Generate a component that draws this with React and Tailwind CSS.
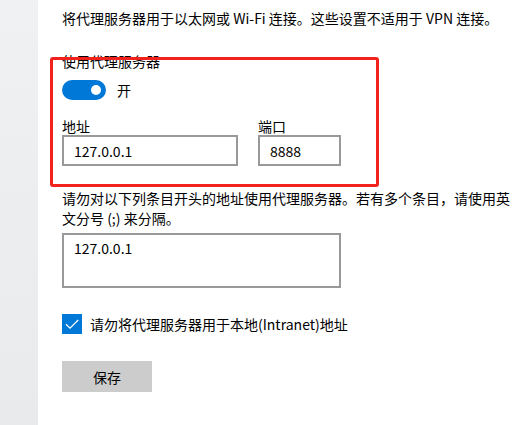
import { useState } from "react";

const font = { fontFamily: '"Noto Sans CJK SC", "Noto Sans", sans-serif' };

const App = () => {
  const [enabled, setEnabled] = useState(true);
  const [bypassLocal, setBypassLocal] = useState(true);

  return (
    <div className="flex w-[523px] h-[425px] bg-white text-[#000] overflow-hidden" style={font}>
      <div className="w-[38px] shrink-0 bg-gradient-to-b from-[#eff1f2] to-[#e9eaeb]" />
      <main className="relative flex-1 pl-[24px] pt-[8px] text-[14px] leading-[20px]">
        <p>将代理服务器用于以太网或 Wi-Fi 连接。这些设置不适用于 VPN 连接。</p>

        <p className="mt-[23px]">使用代理服务器</p>
        <div className="flex items-center mt-[9px] h-[20px]">
          <button
            className={`flex items-center w-[44px] h-[20px] rounded-full px-[5px] ${
              enabled ? "bg-[#0078d7] justify-end" : "bg-white border-2 border-black justify-start"
            }`}
            onClick={() => setEnabled(!enabled)}
          >
            <span className={`w-[10px] h-[10px] rounded-full ${enabled ? "bg-white" : "bg-black"}`} />
          </button>
          <span className="ml-[11px]">{enabled ? "开" : "关"}</span>
        </div>

        <div className="flex gap-[20px] mt-[17px]">
          <div>
            <p className="leading-[18px]">地址</p>
            <div className="w-[176px] h-[31px] border-2 border-[#999] px-[10px] flex items-center">
              127.0.0.1
            </div>
          </div>
          <div>
            <p className="leading-[18px]">端口</p>
            <div className="w-[83px] h-[31px] border-2 border-[#999] px-[10px] flex items-center">
              8888
            </div>
          </div>
        </div>

        <p className="mt-[22px] w-[450px]">
          请勿对以下列条目开头的地址使用代理服务器。若有多个条目，请使用英文分号 (;) 来分隔。
        </p>
        <div className="w-[279px] h-[55px] mt-[5px] border-2 border-[#999] px-[10px] pt-[3px]">
          127.0.0.1
        </div>

        <label className="flex items-center mt-[26px] h-[20px]">
          <span
            className={`w-[20px] h-[20px] flex items-center justify-center ${
              bypassLocal ? "bg-[#0078d7]" : "border-2 border-black"
            }`}
            onClick={() => setBypassLocal(!bypassLocal)}
          >
            {bypassLocal && (
              <svg width="16" height="16" viewBox="0 0 16 16" fill="none">
                <path d="M2 8.2 L6 12.2 L14.2 4" stroke="white" strokeWidth="1.3" />
              </svg>
            )}
          </span>
          <span className="ml-[8px]">请勿将代理服务器用于本地(Intranet)地址</span>
        </label>

        <button className="mt-[27px] w-[90px] h-[31px] bg-[#cccccc] flex items-center justify-center">
          保存
        </button>

        {/* highlight box drawn over the proxy section */}
        <div className="absolute left-[12px] top-[57px] w-[329px] h-[130px] border-[3px] border-[#f3211c] rounded-[3px] pointer-events-none" />
      </main>
    </div>
  );
};

export default App;
